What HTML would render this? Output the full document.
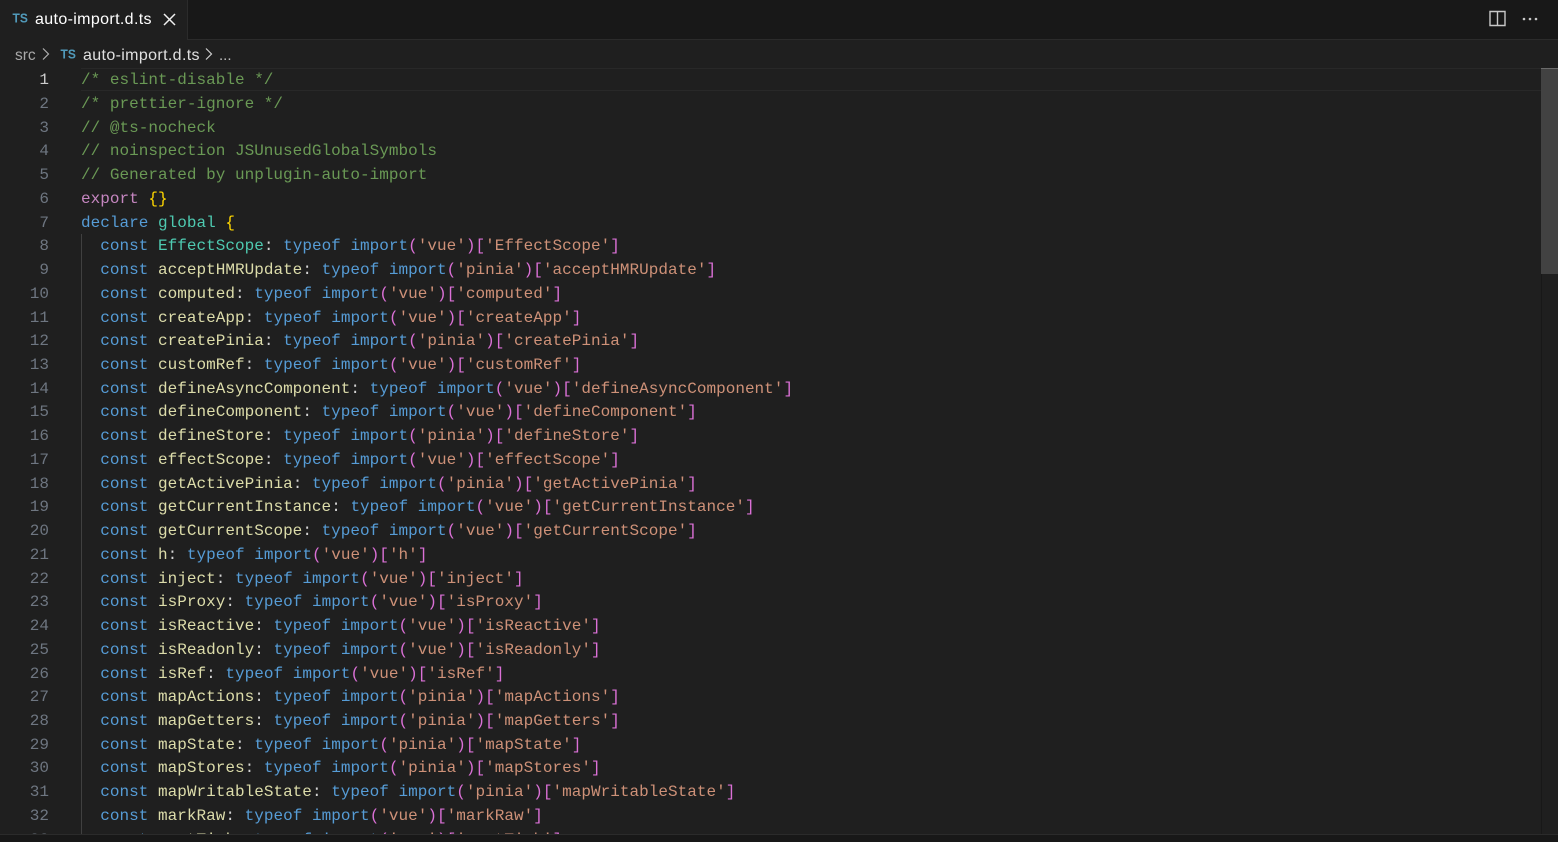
<!DOCTYPE html>
<html><head><meta charset="utf-8"><style>
html,body{margin:0;padding:0;background:#1f1f1f;width:1558px;height:842px;overflow:hidden}
body{position:relative;font-family:"Liberation Sans",sans-serif}
.abs{position:absolute}
#tabbar{left:0;top:0;width:1558px;height:39px;background:#181818;border-bottom:1px solid #2b2b2b}
#tab{left:0;top:0;width:187px;height:40px;background:#1f1f1f;border-right:1px solid #2b2b2b}
.ts{position:absolute;font:bold 12px "Liberation Sans",sans-serif;color:#519aba;transform:scaleY(1.1)}
.t{position:absolute;font-size:16px;color:#fff;white-space:nowrap;letter-spacing:.36px}
#code{left:81px;top:69.2px;width:1460px;height:764.8px;overflow:hidden;font:16px/23.74px "Liberation Mono",monospace;letter-spacing:.02px;color:#d4d4d4;white-space:pre}
#nums{left:0;top:69.2px;width:49px;height:764.8px;overflow:hidden;font:16px/23.74px "Liberation Mono",monospace;color:#6e7681;text-align:right;white-space:pre}
b{font-weight:normal}
.k{color:#569cd6}.f{color:#dcdcaa}.s{color:#ce9178}.p{color:#da70d6}.c{color:#6a9955}.g{color:#4ec9b0}.y{color:#ffd700}.e{color:#c586c0}
</style></head><body>
<div class="abs" id="tabbar"></div>
<div class="abs" id="tab"></div>
<div class="ts" style="left:12.500px;top:11px">TS</div>
<div class="t" style="left:35px;top:11px">auto-import.d.ts</div>
<svg class="abs" style="left:162px;top:12px" width="15" height="15" viewBox="0 0 15 15"><path d="M2 2L13 13M13 2L2 13" stroke="#f0f0f0" stroke-width="1.5" fill="none"/></svg>
<svg class="abs" style="left:1489px;top:10px" width="17" height="17" viewBox="0 0 17 17"><path d="M1 1.500H16V15.500H1ZM8.500 1.500V15.500" stroke="#c8c8c8" stroke-width="1.400" fill="none"/></svg>
<svg class="abs" style="left:1521px;top:17px" width="18" height="4" viewBox="0 0 18 4"><circle cx="3" cy="2" r="1.300" fill="#c8c8c8"/><circle cx="9" cy="2" r="1.300" fill="#c8c8c8"/><circle cx="15" cy="2" r="1.300" fill="#c8c8c8"/></svg>

<div class="t" style="left:15px;top:47px;color:#a9a9a9;font-size:15.500px;letter-spacing:0">src</div>
<svg class="abs" style="left:41px;top:47px" width="10" height="14" viewBox="0 0 10 14"><path d="M2 1.500L7.500 7L2 12.500" stroke="#b0b0b0" stroke-width="1.200" fill="none"/></svg>
<div class="ts" style="left:60.500px;top:47px">TS</div>
<div class="t" style="left:83px;top:47px;color:#e0e0e0">auto-import.d.ts</div>
<svg class="abs" style="left:204px;top:47px" width="10" height="14" viewBox="0 0 10 14"><path d="M2 1.500L7.500 7L2 12.500" stroke="#d0d0d0" stroke-width="1.200" fill="none"/></svg>
<div class="t" style="left:219px;top:47px;color:#c0c0c0;font-size:15px;letter-spacing:0">...</div>

<div class="abs" style="left:81px;top:68px;width:1460px;height:21px;border-top:1px solid #282828;border-bottom:1px solid #282828"></div>
<div class="abs" style="left:81px;top:234px;width:1px;height:600px;background:#404040"></div>

<div class="abs" id="nums"><span style="color:#cccccc">1</span>
2
3
4
5
6
7
8
9
10
11
12
13
14
15
16
17
18
19
20
21
22
23
24
25
26
27
28
29
30
31
32
33</div>

<div class="abs" id="code"><b class="c">/* eslint-disable */</b>
<b class="c">/* prettier-ignore */</b>
<b class="c">// @ts-nocheck</b>
<b class="c">// noinspection JSUnusedGlobalSymbols</b>
<b class="c">// Generated by unplugin-auto-import</b>
<b class="e">export</b> <b class="y">{}</b>
<b class="k">declare</b> <b class="g">global</b> <b class="y">{</b>
  <b class="k">const</b> <b class="g">EffectScope</b>: <b class="k">typeof</b> <b class="k">import</b><b class="p">(</b><b class="s">'vue'</b><b class="p">)[</b><b class="s">'EffectScope'</b><b class="p">]</b>
  <b class="k">const</b> <b class="f">acceptHMRUpdate</b>: <b class="k">typeof</b> <b class="k">import</b><b class="p">(</b><b class="s">'pinia'</b><b class="p">)[</b><b class="s">'acceptHMRUpdate'</b><b class="p">]</b>
  <b class="k">const</b> <b class="f">computed</b>: <b class="k">typeof</b> <b class="k">import</b><b class="p">(</b><b class="s">'vue'</b><b class="p">)[</b><b class="s">'computed'</b><b class="p">]</b>
  <b class="k">const</b> <b class="f">createApp</b>: <b class="k">typeof</b> <b class="k">import</b><b class="p">(</b><b class="s">'vue'</b><b class="p">)[</b><b class="s">'createApp'</b><b class="p">]</b>
  <b class="k">const</b> <b class="f">createPinia</b>: <b class="k">typeof</b> <b class="k">import</b><b class="p">(</b><b class="s">'pinia'</b><b class="p">)[</b><b class="s">'createPinia'</b><b class="p">]</b>
  <b class="k">const</b> <b class="f">customRef</b>: <b class="k">typeof</b> <b class="k">import</b><b class="p">(</b><b class="s">'vue'</b><b class="p">)[</b><b class="s">'customRef'</b><b class="p">]</b>
  <b class="k">const</b> <b class="f">defineAsyncComponent</b>: <b class="k">typeof</b> <b class="k">import</b><b class="p">(</b><b class="s">'vue'</b><b class="p">)[</b><b class="s">'defineAsyncComponent'</b><b class="p">]</b>
  <b class="k">const</b> <b class="f">defineComponent</b>: <b class="k">typeof</b> <b class="k">import</b><b class="p">(</b><b class="s">'vue'</b><b class="p">)[</b><b class="s">'defineComponent'</b><b class="p">]</b>
  <b class="k">const</b> <b class="f">defineStore</b>: <b class="k">typeof</b> <b class="k">import</b><b class="p">(</b><b class="s">'pinia'</b><b class="p">)[</b><b class="s">'defineStore'</b><b class="p">]</b>
  <b class="k">const</b> <b class="f">effectScope</b>: <b class="k">typeof</b> <b class="k">import</b><b class="p">(</b><b class="s">'vue'</b><b class="p">)[</b><b class="s">'effectScope'</b><b class="p">]</b>
  <b class="k">const</b> <b class="f">getActivePinia</b>: <b class="k">typeof</b> <b class="k">import</b><b class="p">(</b><b class="s">'pinia'</b><b class="p">)[</b><b class="s">'getActivePinia'</b><b class="p">]</b>
  <b class="k">const</b> <b class="f">getCurrentInstance</b>: <b class="k">typeof</b> <b class="k">import</b><b class="p">(</b><b class="s">'vue'</b><b class="p">)[</b><b class="s">'getCurrentInstance'</b><b class="p">]</b>
  <b class="k">const</b> <b class="f">getCurrentScope</b>: <b class="k">typeof</b> <b class="k">import</b><b class="p">(</b><b class="s">'vue'</b><b class="p">)[</b><b class="s">'getCurrentScope'</b><b class="p">]</b>
  <b class="k">const</b> <b class="f">h</b>: <b class="k">typeof</b> <b class="k">import</b><b class="p">(</b><b class="s">'vue'</b><b class="p">)[</b><b class="s">'h'</b><b class="p">]</b>
  <b class="k">const</b> <b class="f">inject</b>: <b class="k">typeof</b> <b class="k">import</b><b class="p">(</b><b class="s">'vue'</b><b class="p">)[</b><b class="s">'inject'</b><b class="p">]</b>
  <b class="k">const</b> <b class="f">isProxy</b>: <b class="k">typeof</b> <b class="k">import</b><b class="p">(</b><b class="s">'vue'</b><b class="p">)[</b><b class="s">'isProxy'</b><b class="p">]</b>
  <b class="k">const</b> <b class="f">isReactive</b>: <b class="k">typeof</b> <b class="k">import</b><b class="p">(</b><b class="s">'vue'</b><b class="p">)[</b><b class="s">'isReactive'</b><b class="p">]</b>
  <b class="k">const</b> <b class="f">isReadonly</b>: <b class="k">typeof</b> <b class="k">import</b><b class="p">(</b><b class="s">'vue'</b><b class="p">)[</b><b class="s">'isReadonly'</b><b class="p">]</b>
  <b class="k">const</b> <b class="f">isRef</b>: <b class="k">typeof</b> <b class="k">import</b><b class="p">(</b><b class="s">'vue'</b><b class="p">)[</b><b class="s">'isRef'</b><b class="p">]</b>
  <b class="k">const</b> <b class="f">mapActions</b>: <b class="k">typeof</b> <b class="k">import</b><b class="p">(</b><b class="s">'pinia'</b><b class="p">)[</b><b class="s">'mapActions'</b><b class="p">]</b>
  <b class="k">const</b> <b class="f">mapGetters</b>: <b class="k">typeof</b> <b class="k">import</b><b class="p">(</b><b class="s">'pinia'</b><b class="p">)[</b><b class="s">'mapGetters'</b><b class="p">]</b>
  <b class="k">const</b> <b class="f">mapState</b>: <b class="k">typeof</b> <b class="k">import</b><b class="p">(</b><b class="s">'pinia'</b><b class="p">)[</b><b class="s">'mapState'</b><b class="p">]</b>
  <b class="k">const</b> <b class="f">mapStores</b>: <b class="k">typeof</b> <b class="k">import</b><b class="p">(</b><b class="s">'pinia'</b><b class="p">)[</b><b class="s">'mapStores'</b><b class="p">]</b>
  <b class="k">const</b> <b class="f">mapWritableState</b>: <b class="k">typeof</b> <b class="k">import</b><b class="p">(</b><b class="s">'pinia'</b><b class="p">)[</b><b class="s">'mapWritableState'</b><b class="p">]</b>
  <b class="k">const</b> <b class="f">markRaw</b>: <b class="k">typeof</b> <b class="k">import</b><b class="p">(</b><b class="s">'vue'</b><b class="p">)[</b><b class="s">'markRaw'</b><b class="p">]</b>
  <b class="k">const</b> <b class="f">nextTick</b>: <b class="k">typeof</b> <b class="k">import</b><b class="p">(</b><b class="s">'vue'</b><b class="p">)[</b><b class="s">'nextTick'</b><b class="p">]</b></div>

<div class="abs" style="left:1541px;top:68px;width:17px;height:766px;background:#1f1f1f;border-left:1px solid #181818;box-sizing:border-box"></div>
<div class="abs" style="left:1541px;top:68px;width:17px;height:206px;background:#424242;border-top:1px solid #6b6b6b;box-sizing:border-box"></div>
<div class="abs" style="left:0;top:834px;width:1558px;height:8px;background:#181818;border-top:1px solid #2b2b2b;box-sizing:border-box"></div>
</body></html>
